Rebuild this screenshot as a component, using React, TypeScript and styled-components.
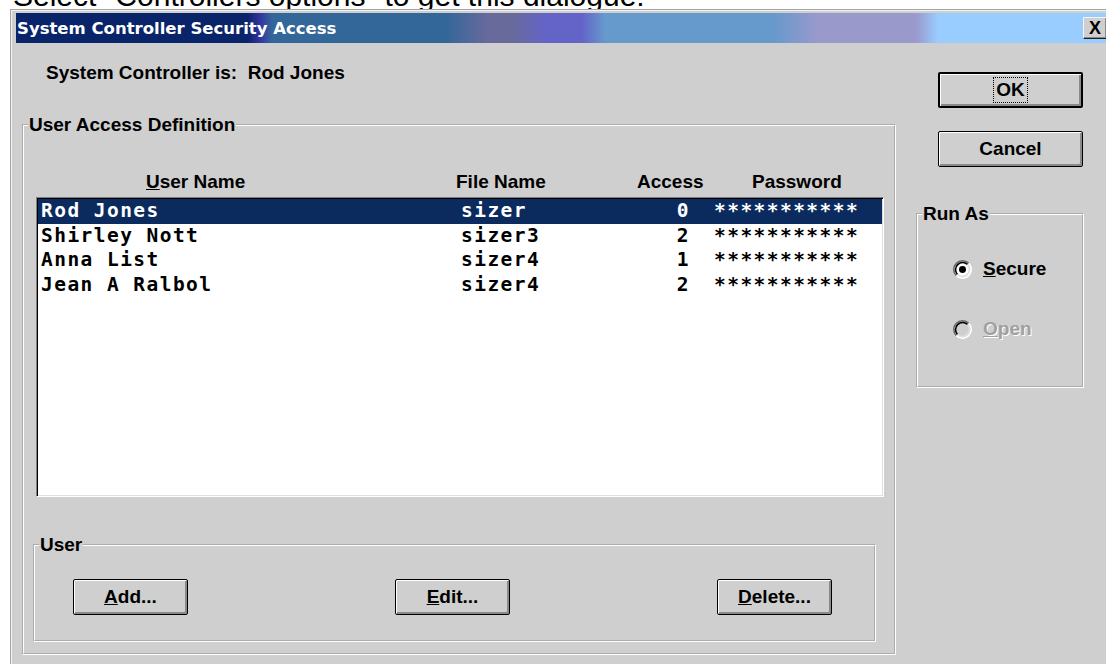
import React, { FC } from 'react';
import styled, { createGlobalStyle } from 'styled-components';

interface UserRow {
    name: string,
    file: string,
    access: number,
    selected?: boolean
}

const users: UserRow[] = [
    { name: 'Rod Jones', file: 'sizer', access: 0, selected: true },
    { name: 'Shirley Nott', file: 'sizer3', access: 2 },
    { name: 'Anna List', file: 'sizer4', access: 1 },
    { name: 'Jean A Ralbol', file: 'sizer4', access: 2 },
];

const PASSWORD_MASK = '***********';

// shared by the header row and the list rows so the columns line up
const COLUMNS = '420px 160px 72px 1fr';

const GlobalStyle = createGlobalStyle`
    html, body {
        margin: 0;
        padding: 0;
        background: #ffffff;
    }
    body {
        font-family: "Liberation Sans", Arial, sans-serif;
        color: #000000;
    }
`;

interface RadioProps {
    checked?: boolean,
    disabled?: boolean
}

const RadioMark: FC<RadioProps> = ({ checked, disabled }) => (
    <svg width="19" height="19" viewBox="0 0 12 12">
        <circle cx="6" cy="6" r="5" fill={disabled ? '#cfcfcf' : '#ffffff'} />
        <path d="M2.11 9.89 A5.5 5.5 0 0 1 9.89 2.11" fill="none" stroke="#6a6a6a" strokeWidth="1" />
        <path d="M9.89 2.11 A5.5 5.5 0 0 1 2.11 9.89" fill="none" stroke="#ffffff" strokeWidth="1" />
        <path d="M2.82 9.18 A4.5 4.5 0 0 1 9.18 2.82" fill="none" stroke="#000000" strokeWidth="1" />
        <path d="M9.18 2.82 A4.5 4.5 0 0 1 2.82 9.18" fill="none" stroke="#dfdfdf" strokeWidth="1" />
        {checked && <circle cx="6" cy="6" r="2.2" fill="#000000" />}
    </svg>
);

const SecurityAccessDialog: FC = () => {
    return (
        <Page>
            <Caption>
                <CaptionText>Select "Controllers options" to get this dialogue:</CaptionText>
            </Caption>
            <Window>
                <TitleBar>
                    <TitleText>System Controller Security Access</TitleText>
                    <CloseButton>X</CloseButton>
                </TitleBar>
                <DialogBody>
                    <MainColumn>
                        <ControllerLine>System Controller is:&nbsp;&nbsp;Rod Jones</ControllerLine>
                        <GroupBox>
                            <Legend>User Access Definition</Legend>
                            <HeaderRow>
                                <HeaderCell $offset={108}><u>U</u>ser Name</HeaderCell>
                                <HeaderCell $offset={-2}>File Name</HeaderCell>
                                <HeaderCell $offset={19}>Access</HeaderCell>
                                <HeaderCell $offset={62}>Password</HeaderCell>
                            </HeaderRow>
                            <ListBox>
                                {users.map((u) => (
                                    <ListRow key={u.name} $selected={u.selected}>
                                        <NameCell>{u.name}</NameCell>
                                        <FileCell>{u.file}</FileCell>
                                        <AccessCell>{u.access}</AccessCell>
                                        <PasswordCell>{PASSWORD_MASK}</PasswordCell>
                                    </ListRow>
                                ))}
                            </ListBox>
                            <UserGroup>
                                <Legend>User</Legend>
                                <ButtonRow>
                                    <PushButton $width={115}><u>A</u>dd...</PushButton>
                                    <PushButton $width={115}><u>E</u>dit...</PushButton>
                                    <PushButton $width={115}><u>D</u>elete...</PushButton>
                                </ButtonRow>
                            </UserGroup>
                        </GroupBox>
                    </MainColumn>
                    <SideColumn>
                        <PushButton $width={145} $default><FocusRing>OK</FocusRing></PushButton>
                        <CancelButton $width={145}>Cancel</CancelButton>
                        <RunAsGroup>
                            <Legend>Run As</Legend>
                            <RadioRow>
                                <RadioMark checked />
                                <RadioLabel><u>S</u>ecure</RadioLabel>
                            </RadioRow>
                            <RadioRow $gap={38}>
                                <RadioMark disabled />
                                <RadioLabel $disabled><u>O</u>pen</RadioLabel>
                            </RadioRow>
                        </RunAsGroup>
                    </SideColumn>
                </DialogBody>
            </Window>
        </Page>
    );
}

const Page = styled.div`
    width: 1106px;
    height: 664px;
    overflow: hidden;
`;

const Caption = styled.div`
    height: 9px;
    overflow: hidden;
    padding-left: 13px;
`;

const CaptionText = styled.div`
    margin-top: -19.5px;
    font-size: 30px;
    line-height: 30px;
    white-space: nowrap;
`;

const Window = styled.div`
    box-sizing: border-box;
    margin-left: 10px;
    width: 1102px;
    height: 700px;
    padding: 3px 4px 0 5px;
    background: #cfcfcf;
    border: 1px solid #a4a4a4;
    box-shadow: inset 1px 1px 0 #f2f2f2;
`;

const TitleBar = styled.div`
    height: 30px;
    display: flex;
    align-items: center;
    background: linear-gradient(to right,
        #0a246a 0px, #0a246a 232px,
        #34349f 244px,
        #336699 256px, #336699 429px,
        #686a9c 472px, #686a9c 497px,
        #6464c8 530px, #6464c8 566px,
        #6699cc 589px, #6699cc 756px,
        #9999cc 803px, #9999cc 900px,
        #99ccff 922px, #99ccff 100%);
`;

const TitleText = styled.div`
    padding-left: 1px;
    font-family: "DejaVu Sans", Verdana, sans-serif;
    font-weight: bold;
    font-size: 16.5px;
    color: #ffffff;
    white-space: nowrap;
`;

const CloseButton = styled.div`
    box-sizing: border-box;
    margin-left: auto;
    width: 24px;
    height: 22px;
    display: flex;
    align-items: center;
    justify-content: center;
    background: #cfcfcf;
    border-top: 1px solid #f4f4f4;
    border-left: 1px solid #f4f4f4;
    border-right: 1px solid #202020;
    border-bottom: 1px solid #202020;
    box-shadow: inset -1px -1px 0 #8a8a8a;
    font-weight: bold;
    font-size: 18px;
    line-height: 1;
`;

const DialogBody = styled.div`
    display: flex;
    gap: 20px;
    padding-left: 6px;
`;

const MainColumn = styled.div`
    width: 874px;
    display: flex;
    flex-direction: column;
`;

const SideColumn = styled.div`
    width: 168px;
    display: flex;
    flex-direction: column;
`;

const ControllerLine = styled.div`
    margin-top: 19px;
    padding-left: 24px;
    font-weight: bold;
    font-size: 19px;
    line-height: 22px;
    white-space: nowrap;
`;

const GroupBox = styled.fieldset`
    margin: 30px 0 0 0;
    padding: 0;
    min-width: 0;
    border: 2px groove #ffffff;
`;

const Legend = styled.legend`
    margin-left: 4px;
    padding: 0 1px;
    font-weight: bold;
    font-size: 19px;
    line-height: 22px;
    white-space: nowrap;
`;

const HeaderRow = styled.div`
    display: grid;
    grid-template-columns: ${COLUMNS};
    margin: 35px 12px 0 14px;
    font-weight: bold;
    font-size: 19px;
    line-height: 22px;
`;

const HeaderCell = styled.div<{ $offset: number }>`
    margin-left: ${(p) => p.$offset}px;
    white-space: nowrap;
`;

const ListBox = styled.div`
    box-sizing: border-box;
    height: 300px;
    margin: 4px 10px 0 12px;
    padding: 1px;
    background: #ffffff;
    border: 1px solid;
    border-color: #808080 #ffffff #ffffff #808080;
    box-shadow: inset 1px 1px 0 #000000, inset -1px -1px 0 #dfdfdf;
`;

const ListRow = styled.div<{ $selected?: boolean }>`
    display: grid;
    grid-template-columns: ${COLUMNS};
    height: 24.7px;
    line-height: 24.7px;
    font-family: "DejaVu Sans Mono", "Liberation Mono", monospace;
    font-weight: bold;
    font-size: 19.5px;
    letter-spacing: 1.45px;
    white-space: nowrap;
    background: ${(p) => (p.$selected ? '#0b2a5e' : 'transparent')};
    color: ${(p) => (p.$selected ? '#ffffff' : '#000000')};
`;

const NameCell = styled.div`
    padding-left: 3px;
`;

const FileCell = styled.div`
    padding-left: 3px;
`;

const AccessCell = styled.div`
    text-align: right;
`;

const PasswordCell = styled.div`
    padding-left: 24px;
`;

const UserGroup = styled.fieldset`
    margin: 37px 18px 11px 9px;
    padding: 0;
    min-width: 0;
    border: 2px groove #ffffff;
`;

const ButtonRow = styled.div`
    display: flex;
    justify-content: space-between;
    margin: 23px 0 25px 0;
    padding: 0 42px 0 38px;
`;

const PushButton = styled.div<{ $width: number, $default?: boolean }>`
    box-sizing: border-box;
    width: ${(p) => p.$width}px;
    height: 36px;
    display: flex;
    align-items: center;
    justify-content: center;
    background: #cfcfcf;
    border: ${(p) => (p.$default ? '2px' : '1px')} solid #000000;
    border-radius: 2px;
    box-shadow: inset 1px 1px 0 #ffffff, inset -2px -2px 0 #8a8a8a;
    font-weight: bold;
    font-size: 19px;
    line-height: 22px;
    white-space: nowrap;
    cursor: pointer;
    margin-top: ${(p) => (p.$default ? '29px' : '0')};
    margin-left: ${(p) => (p.$default ? '22px' : '0')};
`;

const CancelButton = styled(PushButton)`
    margin-top: 23px;
    margin-left: 22px;
`;

const FocusRing = styled.span`
    display: inline-block;
    padding: 1px 2px;
    border: 1px dotted #000000;
`;

const RunAsGroup = styled.fieldset`
    margin: 36px 0 0 0;
    padding: 0;
    min-width: 0;
    border: 2px groove #ffffff;
`;

const RadioRow = styled.div<{ $gap?: number }>`
    display: flex;
    align-items: center;
    gap: 11px;
    height: 22px;
    margin-top: ${(p) => p.$gap ?? 33}px;
    margin-left: 35px;
    &:last-child {
        margin-bottom: 46px;
    }
`;

const RadioLabel = styled.span<{ $disabled?: boolean }>`
    font-weight: bold;
    font-size: 19px;
    line-height: 22px;
    color: ${(p) => (p.$disabled ? '#a0a0a0' : '#000000')};
    text-shadow: ${(p) => (p.$disabled ? '1px 1px 0 #ffffff' : 'none')};
`;

export default function App() {
    return (
        <>
            <GlobalStyle />
            <SecurityAccessDialog />
        </>
    );
}
